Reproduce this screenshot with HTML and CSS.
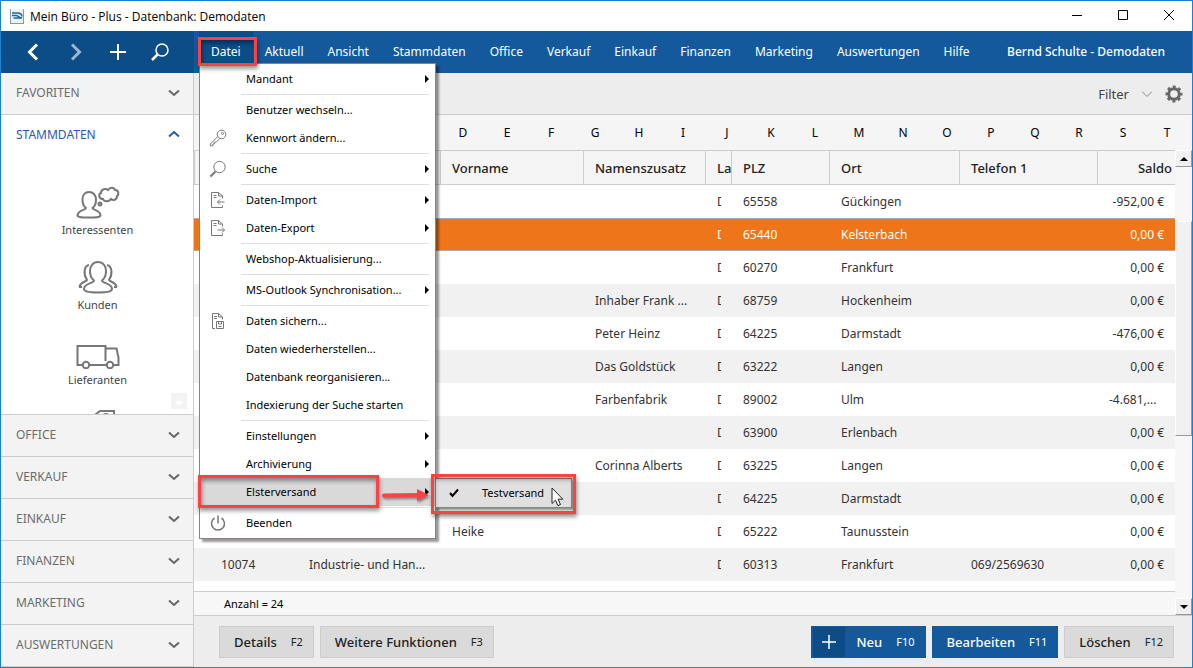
FILE: index.html
```html
<!DOCTYPE html>
<html lang="de">
<head>
  <meta charset="UTF-8">
  <meta name="viewport" content="width=device-width, initial-scale=1.0">
  <title>Mein Büro - Plus</title>
  <link rel="stylesheet" href="styles.css">
</head>
<body>

  <div class="window">
    <div class="titlebar">
      <svg class="app-icon" width="16" height="17" viewBox="0 0 16 17">
        <path d="M1 1h14v14.500H1z" fill="#eef1f4"/>
        <path d="M1.500 16V1.500H1M14.500 16V1.500H15M1 15.500h14" fill="none" stroke="#8b96a3"/>
        <path d="M3 5h5c3 0 5 1 5 3.500M3 7.500h4c2 0 3 2 6 2.500H4.500" fill="none" stroke="#1467b3" stroke-width="1.500"/>
      </svg>
      <span class="title">Mein Büro - Plus - Datenbank: Demodaten</span>
      <div class="window-buttons">
        <button aria-label="Minimieren"><svg width="12" height="12" viewBox="0 0 12 12"><path d="M1 6.500h10"/></svg></button>
        <button aria-label="Maximieren"><svg width="12" height="12" viewBox="0 0 12 12"><path d="M1.500 1.500h9v9h-9z"/></svg></button>
        <button aria-label="Schließen"><svg width="12" height="12" viewBox="0 0 12 12"><path d="M1 1l10 10M11 1L1 11"/></svg></button>
      </div>
    </div>

    <header class="header">
      <div class="tools">
        <button aria-label="Zurück"><svg width="20" height="20" viewBox="0 0 20 20"><path d="M13 2.500L5.500 10l7.500 7.500" stroke-width="3"/></svg></button>
        <button class="dim" aria-label="Vor"><svg width="20" height="20" viewBox="0 0 20 20"><path d="M6 2.500l7.500 7.500L6 17.500" stroke-width="3"/></svg></button>
        <button aria-label="Neu"><svg width="20" height="20" viewBox="0 0 20 20"><path d="M10 2v16M2 10h16" stroke-width="2"/></svg></button>
        <button aria-label="Suchen"><svg width="20" height="20" viewBox="0 0 20 20"><circle cx="12" cy="8" r="6" stroke-width="1.500"/><path d="M7.500 12.500L2 18" stroke-width="2.500"/></svg></button>
      </div>
      <ul class="menubar">
        <li class="open">
          <a href="#">Datei</a>
          <span class="mark mark-datei"></span>
          <ul class="popup">
            <li class="has-sub"><a href="#">Mandant</a></li>
            <li class="sep"></li>
            <li><a href="#">Benutzer wechseln...</a></li>
            <li>
              <svg class="icon" width="18" height="18" viewBox="0 0 18 18"><circle cx="12.500" cy="5.500" r="4.300"/><circle cx="13.500" cy="4.500" r="1"/><path d="M8.800 7.500L1.300 15v1.800h2.500v-1.800h1.500v-1.800h1.800l3.500-3.500"/></svg>
              <a href="#">Kennwort ändern...</a>
            </li>
            <li class="sep"></li>
            <li class="has-sub">
              <svg class="icon" width="18" height="18" viewBox="0 0 18 18"><circle cx="10.500" cy="7" r="5.700"/><path d="M6.500 11.500L1.500 16.500" stroke-width="2"/></svg>
              <a href="#">Suche</a>
            </li>
            <li class="sep"></li>
            <li class="has-sub">
              <svg class="icon" width="18" height="18" viewBox="0 0 18 18"><path d="M13.500 7.500V5L9.500 1.500h-7v15h11v-2M9.500 1.500V5h4M4.500 4.500h3M4.500 6.500h3M8.500 11h7M11 8.500L8.500 11l2.500 2.500"/></svg>
              <a href="#">Daten-Import</a>
            </li>
            <li class="has-sub">
              <svg class="icon" width="18" height="18" viewBox="0 0 18 18"><path d="M13.500 7.500V5L9.500 1.500h-7v15h11v-2M9.500 1.500V5h4M4.500 4.500h3M4.500 6.500h3M8.500 11h7M13 8.500l2.500 2.500-2.500 2.500"/></svg>
              <a href="#">Daten-Export</a>
            </li>
            <li class="sep"></li>
            <li><a href="#">Webshop-Aktualisierung...</a></li>
            <li class="sep"></li>
            <li class="has-sub"><a href="#">MS-Outlook Synchronisation...</a></li>
            <li class="sep"></li>
            <li>
              <svg class="icon" width="18" height="18" viewBox="0 0 18 18"><path d="M13.500 7.500V5L9.500 1.500h-6v15h2.500M9.500 1.500V5h4M5 4.500h3M5 6.500h3M7.500 9.500h7v7h-7zM9.500 9.500v2.500h3V9.500M9.500 14.500h3"/></svg>
              <a href="#">Daten sichern...</a>
            </li>
            <li><a href="#">Daten wiederherstellen...</a></li>
            <li><a href="#">Datenbank reorganisieren...</a></li>
            <li><a href="#">Indexierung der Suche starten</a></li>
            <li class="sep"></li>
            <li class="has-sub"><a href="#">Einstellungen</a></li>
            <li class="has-sub"><a href="#">Archivierung</a></li>
            <li class="has-sub active">
              <a href="#">Elsterversand</a>
              <span class="mark mark-elster"></span>
              <svg class="arrow" width="48" height="16" viewBox="0 0 48 16"><path d="M2 8.500L38 8" stroke="#fb4144" stroke-width="4" stroke-linecap="round"/><path d="M35 2l12 6-12 6z" fill="#fb4144"/></svg>
              <ul class="submenu">
                <li>
                  <svg class="check" width="10" height="10" viewBox="0 0 10 10"><path d="M1 5l2.500 3L9 1.500" fill="none" stroke="#000" stroke-width="2"/></svg>
                  <a href="#">Testversand</a>
                  <svg class="cursor" width="13" height="20" viewBox="0 0 13 20"><path d="M1 1v15.500l3.500-3.300 2.400 5.500 2.600-1.200-2.400-5.300h4.700z" fill="#fff" stroke="#222"/></svg>
                </li>
              </ul>
            </li>
            <li class="sep"></li>
            <li>
              <svg class="icon" width="18" height="18" viewBox="0 0 18 18"><path d="M5.500 4a6.500 6.500 0 1 0 7 0M9 1.500v8" stroke-width="1.500"/></svg>
              <a href="#">Beenden</a>
            </li>
          </ul>
        </li>
        <li><a href="#">Aktuell</a></li>
        <li><a href="#">Ansicht</a></li>
        <li><a href="#">Stammdaten</a></li>
        <li><a href="#">Office</a></li>
        <li><a href="#">Verkauf</a></li>
        <li><a href="#">Einkauf</a></li>
        <li><a href="#">Finanzen</a></li>
        <li><a href="#">Marketing</a></li>
        <li><a href="#">Auswertungen</a></li>
        <li><a href="#">Hilfe</a></li>
      </ul>
      <div class="account">Bernd Schulte - Demodaten</div>
    </header>

    <div class="body">
      <nav class="sidebar">
        <button class="group">FAVORITEN <svg width="12" height="8" viewBox="0 0 12 8"><path d="M1 1.500l5 4.500 5-4.500"/></svg></button>
        <div class="section">
          <button class="group current">STAMMDATEN <svg width="12" height="8" viewBox="0 0 12 8"><path d="M1 6.500L6 2l5 4.500"/></svg></button>
          <div class="shortcuts">
            <a href="#">
              <svg width="44" height="34" viewBox="0 0 44 34"><path d="M13 7c-4 0-6.500 3-6.500 7.500 0 4 2 7.500 3.500 8.500 0 2-8 2-8.500 7 0 2 2 2.500 11.500 2.500S24.500 32 24.500 30c-.5-5-8-5-8-7 1.500-1 3.500-4.500 3.500-8.500C20 10 17 7 13 7z"/><path d="M27 14c-4 0-5-5-2-6 0-4 5-5 7-3 2-3 6-3 7 0 4 0 4 5 2 6 0 4-4 5-6 3-2 3-7 3-8 0z"/><circle cx="24" cy="19" r="1.500"/></svg>
              Interessenten
            </a>
            <a href="#">
              <svg width="44" height="34" viewBox="0 0 44 34"><path d="M22 2c-5 0-8 4-8 9 0 4 2 8 4 9.500 0 3-10 2.500-10 8.500 0 2 3 3.500 14 3.500S36 31 36 29c0-6-10-5.500-10-8.500 2-1.500 4-5.500 4-9.500 0-5-3-9-8-9z"/><path d="M13 5c-5 1-6 9-2 15-1 2-7 2-7.500 7M31 5c5 1 6 9 2 15 1 2 7 2 7.500 7M6 27H3M38 27h3"/></svg>
              Kunden
            </a>
            <a href="#">
              <svg width="44" height="34" viewBox="0 0 44 34"><path d="M6.500 30H1.500V11h28v15M29.500 13.500h11l2 9V30h-5M30 30H14"/><circle cx="10" cy="30" r="3.200"/><circle cx="34" cy="30" r="3.200"/></svg>
              Lieferanten
            </a>
            <a href="#" aria-label="Artikel">
              <svg width="44" height="34" viewBox="0 0 44 34"><path d="M15 8l9-7h14v30H15z"/><circle cx="30" cy="7" r="3"/></svg>
            </a>
          </div>
          <button class="scroll-down" aria-label="Weiter"><svg width="8" height="6" viewBox="0 0 8 6"><path d="M0 2l2-1.500h4L8 2 4 6z" fill="#fff"/></svg></button>
        </div>
        <button class="group">OFFICE <svg width="12" height="8" viewBox="0 0 12 8"><path d="M1 1.500l5 4.500 5-4.500"/></svg></button>
        <button class="group">VERKAUF <svg width="12" height="8" viewBox="0 0 12 8"><path d="M1 1.500l5 4.500 5-4.500"/></svg></button>
        <button class="group">EINKAUF <svg width="12" height="8" viewBox="0 0 12 8"><path d="M1 1.500l5 4.500 5-4.500"/></svg></button>
        <button class="group">FINANZEN <svg width="12" height="8" viewBox="0 0 12 8"><path d="M1 1.500l5 4.500 5-4.500"/></svg></button>
        <button class="group">MARKETING <svg width="12" height="8" viewBox="0 0 12 8"><path d="M1 1.500l5 4.500 5-4.500"/></svg></button>
        <button class="group">AUSWERTUNGEN <svg width="12" height="8" viewBox="0 0 12 8"><path d="M1 1.500l5 4.500 5-4.500"/></svg></button>
      </nav>

      <main class="main">
        <div class="filterbar">
          <button class="filter">Filter <svg width="10" height="6" viewBox="0 0 10 6"><path d="M0 .5l5 5 5-5" fill="none" stroke="#888"/></svg></button>
          <button aria-label="Einstellungen"><svg width="18" height="18" viewBox="0 0 18 18"><circle cx="9" cy="9" r="5.300" fill="none" stroke="#666" stroke-width="3"/><circle cx="9" cy="9" r="7.300" fill="none" stroke="#666" stroke-width="2.400" stroke-dasharray="3 2.733" stroke-dashoffset="1.500"/></svg></button>
        </div>
        <div class="letters">
          <a href="#">D</a><a href="#">E</a><a href="#">F</a><a href="#">G</a><a href="#">H</a><a href="#">I</a><a href="#">J</a><a href="#">K</a><a href="#">L</a><a href="#">M</a><a href="#">N</a><a href="#">O</a><a href="#">P</a><a href="#">Q</a><a href="#">R</a><a href="#">S</a><a href="#">T</a>
        </div>
        <div class="list">
          <div class="list-content">
            <div class="table-wrap">
              <table>
                <colgroup>
                  <col class="c-mark"><col class="c-nr"><col class="c-name"><col class="c-vorname"><col class="c-zusatz">
                  <col class="c-land"><col class="c-plz"><col class="c-ort"><col class="c-tel"><col class="c-saldo">
                </colgroup>
                <thead>
                  <tr><th></th><th></th><th></th><th>Vorname</th><th>Namenszusatz</th><th class="land">La</th><th>PLZ</th><th>Ort</th><th>Telefon 1</th><th class="saldo">Saldo</th></tr>
                </thead>
                <tbody>
                  <tr><td></td><td></td><td></td><td></td><td></td><td><span class="clip">D</span></td><td>65558</td><td>Gückingen</td><td></td><td class="saldo">-952,00 €</td></tr>
                  <tr class="selected"><td></td><td></td><td></td><td></td><td></td><td><span class="clip">D</span></td><td>65440</td><td>Kelsterbach</td><td></td><td class="saldo">0,00 €</td></tr>
                  <tr><td></td><td></td><td></td><td></td><td></td><td><span class="clip">D</span></td><td>60270</td><td>Frankfurt</td><td></td><td class="saldo">0,00 €</td></tr>
                  <tr><td></td><td></td><td></td><td></td><td>Inhaber Frank ...</td><td><span class="clip">D</span></td><td>68759</td><td>Hockenheim</td><td></td><td class="saldo">0,00 €</td></tr>
                  <tr><td></td><td></td><td></td><td></td><td>Peter Heinz</td><td><span class="clip">D</span></td><td>64225</td><td>Darmstadt</td><td></td><td class="saldo">-476,00 €</td></tr>
                  <tr><td></td><td></td><td></td><td></td><td>Das Goldstück</td><td><span class="clip">D</span></td><td>63222</td><td>Langen</td><td></td><td class="saldo">0,00 €</td></tr>
                  <tr><td></td><td></td><td></td><td></td><td>Farbenfabrik</td><td><span class="clip">D</span></td><td>89002</td><td>Ulm</td><td></td><td>-4.681,...</td></tr>
                  <tr><td></td><td></td><td></td><td></td><td></td><td><span class="clip">D</span></td><td>63900</td><td>Erlenbach</td><td></td><td class="saldo">0,00 €</td></tr>
                  <tr><td></td><td></td><td></td><td></td><td>Corinna Alberts</td><td><span class="clip">D</span></td><td>63225</td><td>Langen</td><td></td><td class="saldo">0,00 €</td></tr>
                  <tr><td></td><td></td><td></td><td></td><td></td><td><span class="clip">D</span></td><td>64225</td><td>Darmstadt</td><td></td><td class="saldo">0,00 €</td></tr>
                  <tr><td></td><td></td><td></td><td>Heike</td><td></td><td><span class="clip">D</span></td><td>65222</td><td>Taunusstein</td><td></td><td class="saldo">0,00 €</td></tr>
                  <tr><td></td><td>10074</td><td>Industrie- und Han...</td><td></td><td></td><td><span class="clip">D</span></td><td>60313</td><td>Frankfurt</td><td>069/2569630</td><td class="saldo">0,00 €</td></tr>
                </tbody>
              </table>
            </div>
            <div class="count">Anzahl = 24</div>
          </div>
          <div class="scrollbar">
            <button aria-label="Nach oben"><svg width="8" height="4" viewBox="0 0 8 4"><path d="M0 4l4-4 4 4z"/></svg></button>
            <div class="track"><div class="thumb"></div></div>
            <button aria-label="Nach unten"><svg width="8" height="4" viewBox="0 0 8 4"><path d="M0 0l4 4 4-4z"/></svg></button>
          </div>
        </div>
        <footer class="actions">
          <button>Details <kbd>F2</kbd></button>
          <button class="wide">Weitere Funktionen <kbd>F3</kbd></button>
          <button class="primary with-icon"><span class="plus"><svg width="14" height="14" viewBox="0 0 14 14"><path d="M7 0v14M0 7h14" stroke="#fff" stroke-width="1.500"/></svg></span>Neu <kbd>F10</kbd></button>
          <button class="primary">Bearbeiten <kbd>F11</kbd></button>
          <button>Löschen <kbd>F12</kbd></button>
        </footer>
      </main>
    </div>
  </div>

</body>
</html>
```
FILE: styles.css
```css
/* Basic reset */
*,
*::before,
*::after {
  box-sizing: border-box;
  margin: 0;
  padding: 0;
}

body {
  font-family: 'Noto Sans', 'Open Sans', sans-serif;
  font-size: 13px;
  color: #222;
  background-color: #fff;
}

button {
  font: inherit;
  color: inherit;
  background: none;
  border: none;
}

a {
  color: inherit;
  text-decoration: none;
}

ul {
  list-style: none;
}

.window {
  display: flex;
  flex-direction: column;
  height: 100vh;
  border: 1px solid #1a80d0;
}

/* Title bar */
.titlebar {
  display: flex;
  align-items: center;
  height: 30px;
  padding-left: 8px;
  font-family: 'Open Sans', 'Noto Sans', sans-serif;
  font-size: 12px;
  color: #000;
}

.title {
  margin-left: 5px;
}

.window-buttons {
  display: flex;
  margin-left: auto;
}

.window-buttons button {
  width: 46px;
  height: 28px;
}

.window-buttons svg {
  fill: none;
  stroke: #000;
}

/* Blue header */
.header {
  display: flex;
  height: 42px;
  background-color: #13599b;
  font-size: 12px;
  line-height: 42px;
  color: #fff;
}

.tools {
  display: flex;
  flex: none;
  width: 193px;
  padding-left: 12px;
  background-color: #0c4d87;
}

.tools button {
  width: 42px;
}

.tools svg {
  display: block;
  margin: 0 auto;
  fill: none;
  stroke: #fff;
}

.tools .dim {
  opacity: 0.6;
}

.menubar {
  display: flex;
  padding-left: 5px;
}

.menubar > li {
  position: relative;
}

.menubar > li > a {
  display: block;
  padding: 0 12px;
}

.menubar > .open > a {
  background-color: #0c4d87;
}

.account {
  margin-left: auto;
  padding-right: 27px;
  font-weight: 500;
  white-space: nowrap;
}

/* File menu */
.popup {
  position: absolute;
  z-index: 2;
  top: 32px;
  left: 0;
  width: 237px;
  padding: 1px 0;
  background-color: #fff;
  border: 1px solid #8f8080;
  box-shadow: 3px 3px 2px rgba(0, 0, 0, 0.4);
  font-size: 11px;
  color: #000;
}

.popup li {
  position: relative;
  height: 28px;
  padding-left: 46px;
  line-height: 28px;
  white-space: nowrap;
}

.popup .sep {
  height: 3px;
  margin: 0 6px 0 41px;
  border-top: 1px solid #fff;
  border-bottom: 1px solid #fff;
  background-color: #ddd;
}

.popup .active {
  background-color: #d9d9d9;
}

.popup .has-sub::after {
  content: "";
  position: absolute;
  top: 10px;
  right: 6px;
  border: 4px solid transparent;
  border-left: 4px solid #000;
  border-right: none;
}

.icon {
  position: absolute;
  top: 5px;
  left: 9px;
  fill: none;
  stroke: #777;
}

.popup .submenu {
  position: absolute;
  top: 0;
  left: 235px;
  width: 137px;
  background-color: #e0e0e0;
  border: 1px solid #8f8080;
  box-shadow: 2px 2px 2px rgba(0, 0, 0, 0.4);
}

.check {
  position: absolute;
  top: 9px;
  left: 13px;
}

.cursor {
  position: absolute;
  top: 8px;
  left: 115px;
}

/* Red callouts */
.mark {
  position: absolute;
  z-index: 3;
  border: 3px solid #fb4144;
  box-shadow: 1px 3px 4px rgba(0, 0, 0, 0.4), inset 1px 3px 4px rgba(0, 0, 0, 0.4);
  pointer-events: none;
}

.mark-datei {
  top: 6px;
  left: -1px;
  width: 59px;
  height: 29px;
}

.mark-elster {
  top: -3px;
  left: -2px;
  width: 181px;
  height: 33px;
}

.submenu::after {
  content: "";
  position: absolute;
  z-index: 3;
  top: -5px;
  left: -5px;
  width: 145px;
  height: 40px;
  border: 3px solid #fb4144;
  box-shadow: 1px 3px 4px rgba(0, 0, 0, 0.4), inset 1px 3px 4px rgba(0, 0, 0, 0.3);
}

.arrow {
  position: absolute;
  z-index: 3;
  top: 9px;
  left: 182px;
  filter: drop-shadow(1px 2px 1px rgba(0, 0, 0, 0.4));
}

.body {
  display: flex;
  flex: 1;
  min-height: 0;
}

/* Sidebar */
.sidebar {
  display: flex;
  flex: none;
  flex-direction: column;
  width: 193px;
  border-right: 1px solid #ccc;
}

.group {
  display: flex;
  flex: none;
  justify-content: space-between;
  align-items: center;
  width: 100%;
  height: 42px;
  padding: 0 13px 2px 15px;
  background-color: #f3f3f3;
  border-bottom: 1px solid #ccc;
  font-size: 12px;
  color: #6c6c6c;
}

.group svg {
  fill: none;
  stroke: #666;
  stroke-width: 2;
}

.group.current {
  height: 40px;
  background-color: #fff;
  border-bottom: none;
  color: #1f58b8;
}

.current svg {
  stroke: #1f58b8;
}

.section {
  position: relative;
  flex: 1;
  min-height: 0;
  overflow: hidden;
  border-bottom: 1px solid #ccc;
}

.shortcuts {
  padding: 30px 0 0 1px;
}

.shortcuts a {
  display: block;
  height: 75px;
  font-size: 11px;
  line-height: 20px;
  text-align: center;
  color: #444;
}

.shortcuts svg {
  display: block;
  margin: 0 auto 1px;
  fill: none;
  stroke: #777;
  stroke-width: 2;
}

.scroll-down {
  position: absolute;
  right: 6px;
  bottom: 5px;
  width: 16px;
  height: 16px;
  background-color: #f3f3f3;
  line-height: 10px;
}

/* Main area */
.main {
  display: flex;
  flex: 1;
  flex-direction: column;
  min-width: 0;
}

.filterbar {
  display: flex;
  justify-content: flex-end;
  align-items: center;
  gap: 13px;
  height: 42px;
  padding-right: 9px;
  background-color: #ededed;
  border-bottom: 1px solid #ccc;
}

.filterbar button {
  display: flex;
  align-items: center;
  gap: 13px;
}

.filter {
  color: #444;
}

.letters {
  display: flex;
  height: 35px;
  padding: 0 3px 0 247px;
  background-color: #f5f5f5;
  font-size: 12px;
  line-height: 35px;
  color: #000;
}

.letters a {
  flex: 1;
  text-align: center;
}

.list {
  display: flex;
  flex: 1;
  min-height: 0;
}

.list-content {
  display: flex;
  flex: 1;
  flex-direction: column;
  min-width: 0;
}

.table-wrap {
  flex: 1;
  min-height: 0;
  overflow: hidden;
}

table {
  width: 100%;
  table-layout: fixed;
  border-collapse: separate;
  border-spacing: 0;
}

.c-mark { width: 15px; }
.c-nr { width: 88px; }
.c-vorname { width: 143px; }
.c-zusatz { width: 122px; }
.c-land { width: 26px; }
.c-plz { width: 98px; }
.c-ort { width: 130px; }
.c-tel { width: 138px; }
.c-saldo { width: 78px; }

th,
td {
  height: 33px;
  padding: 0 11px;
  overflow: hidden;
  font-size: 12px;
  text-align: left;
  white-space: nowrap;
}

th {
  height: 35px;
  background-color: #f5f5f5;
  border: 1px solid #ccc;
  border-width: 1px 0 1px 1px;
  font-size: 13px;
  font-weight: 500;
}

td {
  padding-left: 12px;
  color: #333;
}

tbody tr:nth-child(even) td {
  background-color: #f1f1f1;
}

tbody tr.selected td {
  background-color: #ee751a;
  border-top: 1px solid #aaa;
  border-bottom: 1px solid #aaa;
  color: #fff;
}

.land {
  padding-right: 0;
}

.saldo {
  text-align: right;
}

th.saldo {
  padding-right: 3px;
}

.clip {
  display: block;
  width: 4px;
  overflow: hidden;
}

.count {
  height: 25px;
  padding-left: 30px;
  background-color: #f7f7f7;
  border: 1px solid #ccc;
  border-width: 1px 0;
  font-size: 11px;
  line-height: 24px;
  color: #000;
}

.scrollbar {
  display: flex;
  flex-direction: column;
  width: 17px;
  background-color: #f0f0f0;
  border-bottom: 1px solid #ccc;
}

.scrollbar button {
  display: flex;
  justify-content: center;
  align-items: center;
  height: 17px;
  background-color: #f0f0f0;
  border: 1px solid #fff;
  border-right-color: #999;
  border-bottom-color: #999;
}

.track {
  flex: 1;
  padding-top: 54px;
  background-color: #f7f7f7;
}

.thumb {
  height: 57%;
  background-color: #f0f0f0;
  border: 1px solid #fff;
  border-right-color: #999;
  border-bottom-color: #999;
}

/* Bottom buttons */
.actions {
  display: flex;
  align-items: center;
  gap: 6px;
  height: 51px;
  padding: 0 18px 0 25px;
  background-color: #ededed;
}

.actions button {
  display: flex;
  align-items: center;
  height: 32px;
  padding: 0 10px 0 14px;
  background-color: #dadada;
  border: 1px solid #ccc;
  font-weight: 500;
}

.actions kbd {
  margin-left: 14px;
  font-family: inherit;
  font-size: 11px;
  font-weight: 400;
}

.actions .wide {
  margin-right: auto;
}

.actions .primary {
  background-color: #13599b;
  border-color: #13599b;
  color: #fff;
}

.actions .with-icon {
  padding-left: 1px;
}

.plus {
  display: flex;
  justify-content: center;
  align-items: center;
  width: 32px;
  height: 30px;
  margin-right: 12px;
  background-color: #0c4d87;
}
```
